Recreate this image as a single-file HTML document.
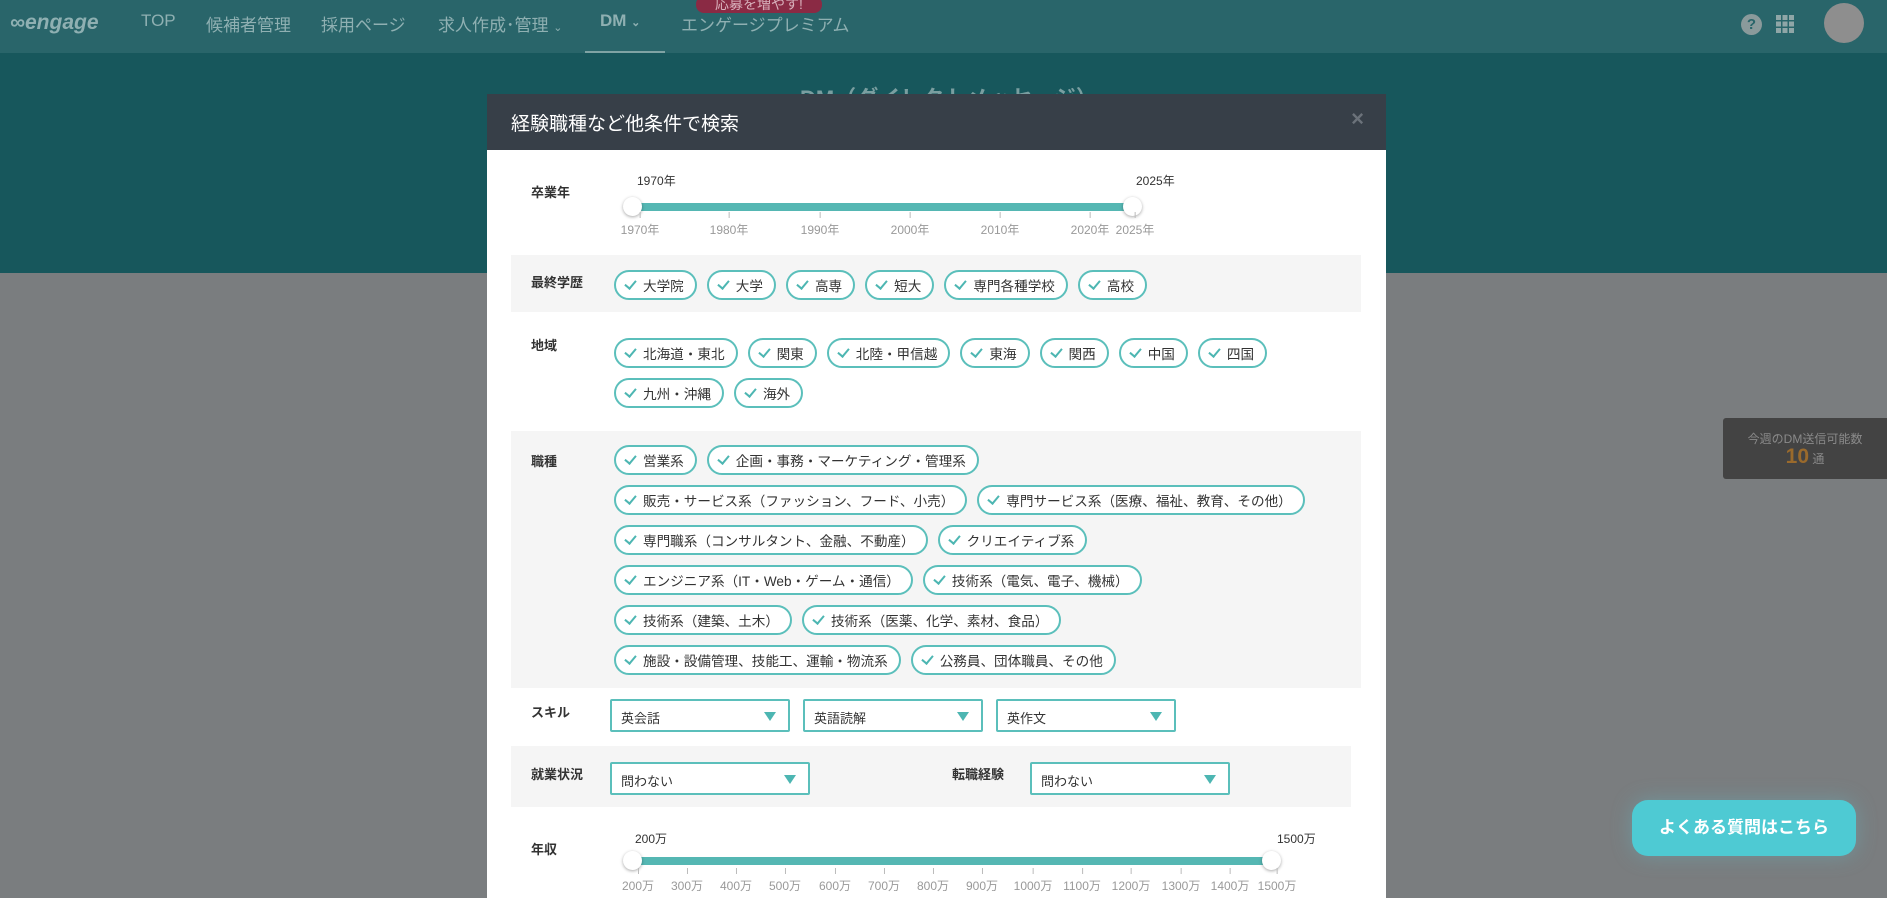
<!DOCTYPE html>
<html><head><meta charset="utf-8"><style>
*{box-sizing:border-box;margin:0;padding:0}
body{width:1887px;height:898px;overflow:hidden;position:relative;background:#7a7d7f;font-family:"Liberation Sans","Noto Sans CJK JP",sans-serif;}
.nav{position:absolute;left:0;top:0;width:1887px;height:53px;background:#29656a;}
.nav .it{position:absolute;top:11px;font-size:17px;color:#8fb0b2;}
.band{position:absolute;left:0;top:53px;width:1887px;height:220px;background:#17575c;}
.modal{position:absolute;left:487px;top:94px;width:899px;height:804px;background:#fff;}
.mh{height:56px;background:#373f48;color:#fff;font-size:19px;padding:15px 24px;position:relative}
.mh .x{position:absolute;right:22px;top:12px;color:#6b727a;font-size:22px;font-weight:bold}
.row{position:absolute;left:24px;width:850px;}
.lbl{position:absolute;left:20px;font-size:13px;font-weight:bold;color:#333}
.chips{position:absolute;left:103px;width:740px;display:flex;flex-direction:column;gap:10px}
.ln{display:flex;gap:10px}
.chip{height:30px;border:2px solid #5bbfbb;border-radius:15px;padding:0 11px 0 9px;font-size:13.6px;color:#333;display:flex;align-items:center;background:#fff;white-space:nowrap}
.chip:before{content:"";width:5px;height:9px;border-right:2.5px solid #4db6b2;border-bottom:2.5px solid #4db6b2;transform:rotate(40deg);margin:-3px 9px 0 2px}
.sel{position:absolute;height:33px;border:2px solid #5bbfbb;border-radius:2px;font-size:13px;color:#333;padding:7px 9px;background:#fff}
.sel:after{content:"";position:absolute;right:12px;top:11px;border:6px solid transparent;border-top:9px solid #4db6b2;border-bottom:0}
.track{position:absolute;height:8px;background:#55b7b3}
.knob{position:absolute;width:19px;height:19px;border-radius:50%;background:#fff;box-shadow:0 1px 3px rgba(0,0,0,.35)}
.tk{position:absolute;font-size:12px;color:#999;transform:translateX(-50%)}
.tk:before{content:"";position:absolute;left:50%;top:-9px;width:1px;height:6px;background:#bbb}
.vl{position:absolute;font-size:12px;color:#333}
</style></head><body>
<div class="nav">
 <div style="position:absolute;left:10px;top:11px;font-size:21px;font-style:italic;font-weight:bold;color:#8fb0b2;letter-spacing:0">∞<span>engage</span></div>
 <div class="it" style="left:141px">TOP</div>
 <div class="it" style="left:206px">候補者管理</div>
 <div class="it" style="left:321px">採用ページ</div>
 <div class="it" style="left:438px">求人作成･管理 <span style="font-size:11px">⌄</span></div>
 <div class="it" style="left:600px;font-weight:bold">DM <span style="font-size:11px">⌄</span></div>
 <div class="it" style="left:681px">エンゲージプレミアム</div>
 <div style="position:absolute;left:696px;top:-4px;width:126px;height:17px;background:#8a2a44;border-radius:8px;color:#d8b0bb;font-size:14px;text-align:center;line-height:16px">応募を増やす!</div>
 <div style="position:absolute;left:585px;top:51px;width:80px;height:3px;background:#7fa3a4"></div>
 <div style="position:absolute;left:1741px;top:14px;width:21px;height:21px;border-radius:50%;background:#8a9a9b;color:#29656a;font-weight:bold;font-size:15px;text-align:center;line-height:21px">?</div>
 <div style="position:absolute;left:1776px;top:15px;width:18px;height:18px;background:repeating-linear-gradient(90deg,#8fa6a7 0 5px,transparent 5px 6.5px);-webkit-mask:repeating-linear-gradient(0deg,#000 0 5px,transparent 5px 6.5px)"></div>
 <div style="position:absolute;left:1824px;top:3px;width:40px;height:40px;border-radius:50%;background:#8e8e8e"></div>
</div>
<div class="band"><div style="position:absolute;left:800px;top:28px;font-size:22px;font-weight:bold;color:#7a9ea0">DM（ダイレクトメッセージ）</div></div>
<div style="position:absolute;left:1723px;top:418px;width:164px;height:61px;background:#434343;border-radius:3px 0 0 3px;text-align:center;color:#8a8a8a;font-size:12px;padding-top:12px">今週のDM送信可能数<br><span style="color:#9a6a2c;font-size:21px;font-weight:bold;line-height:20px">10</span> 通</div>
<div style="position:absolute;left:1632px;top:800px;width:224px;height:56px;background:#4ecad3;border-radius:16px;color:#fff;font-weight:bold;font-size:17px;text-align:center;line-height:56px;box-shadow:0 0 20px rgba(100,190,200,.4)">よくある質問はこちら</div>
<div class="modal">
 <div class="mh">経験職種など他条件で検索<span class="x">×</span></div>
 <div class="row" style="top:56px;height:105px">
  <div class="lbl" style="top:32px">卒業年</div>
  <div class="vl" style="left:126px;top:22px">1970年</div>
  <div class="vl" style="left:625px;top:22px">2025年</div>
  <div class="track" style="left:122px;top:53px;width:499px"></div>
  <div class="knob" style="left:112px;top:47px"></div><div class="knob" style="left:612px;top:47px"></div>
  <div class="tk" style="left:129px;top:71px">1970年</div><div class="tk" style="left:218px;top:71px">1980年</div><div class="tk" style="left:309px;top:71px">1990年</div><div class="tk" style="left:399px;top:71px">2000年</div><div class="tk" style="left:489px;top:71px">2010年</div><div class="tk" style="left:579px;top:71px">2020年</div><div class="tk" style="left:624px;top:71px">2025年</div>
 </div>
 <div class="row" style="top:161px;height:57px;background:#f5f5f5">
  <div class="lbl" style="top:17px">最終学歴</div>
  <div class="chips" style="top:15px"><div class="ln"><span class="chip">大学院</span><span class="chip">大学</span><span class="chip">高専</span><span class="chip">短大</span><span class="chip">専門各種学校</span><span class="chip">高校</span></div></div>
 </div>
 <div class="row" style="top:218px;height:119px">
  <div class="lbl" style="top:23px">地域</div>
  <div class="chips" style="top:26px"><div class="ln"><span class="chip">北海道・東北</span><span class="chip">関東</span><span class="chip">北陸・甲信越</span><span class="chip">東海</span><span class="chip">関西</span><span class="chip">中国</span><span class="chip">四国</span></div><div class="ln"><span class="chip">九州・沖縄</span><span class="chip">海外</span></div></div>
 </div>
 <div class="row" style="top:337px;height:257px;background:#f5f5f5">
  <div class="lbl" style="top:20px">職種</div>
  <div class="chips" style="top:14px">
   <div class="ln"><span class="chip">営業系</span><span class="chip">企画・事務・マーケティング・管理系</span></div>
   <div class="ln"><span class="chip">販売・サービス系（ファッション、フード、小売）</span><span class="chip">専門サービス系（医療、福祉、教育、その他）</span></div>
   <div class="ln"><span class="chip">専門職系（コンサルタント、金融、不動産）</span><span class="chip">クリエイティブ系</span></div>
   <div class="ln"><span class="chip">エンジニア系（IT・Web・ゲーム・通信）</span><span class="chip">技術系（電気、電子、機械）</span></div>
   <div class="ln"><span class="chip">技術系（建築、土木）</span><span class="chip">技術系（医薬、化学、素材、食品）</span></div>
   <div class="ln"><span class="chip">施設・設備管理、技能工、運輸・物流系</span><span class="chip">公務員、団体職員、その他</span></div>
  </div>
 </div>
 <div class="row" style="top:594px;height:58px">
  <div class="lbl" style="top:14px">スキル</div>
  <div class="sel" style="left:99px;top:11px;width:180px">英会話</div>
  <div class="sel" style="left:292px;top:11px;width:180px">英語読解</div>
  <div class="sel" style="left:485px;top:11px;width:180px">英作文</div>
 </div>
 <div class="row" style="top:652px;height:61px;width:840px;background:#f5f5f5">
  <div class="lbl" style="top:18px">就業状況</div>
  <div class="sel" style="left:99px;top:16px;width:200px">問わない</div>
  <div class="lbl" style="left:441px;top:18px">転職経験</div>
  <div class="sel" style="left:519px;top:16px;width:200px">問わない</div>
 </div>
 <div class="row" style="top:713px;height:91px">
  <div class="lbl" style="top:32px">年収</div>
  <div class="vl" style="left:124px;top:23px">200万</div>
  <div class="vl" style="left:766px;top:23px">1500万</div>
  <div class="track" style="left:122px;top:50px;width:638px"></div>
  <div class="knob" style="left:112px;top:44px"></div><div class="knob" style="left:751px;top:44px"></div>
  <div class="tk" style="left:127px;top:70px">200万</div><div class="tk" style="left:176px;top:70px">300万</div><div class="tk" style="left:225px;top:70px">400万</div><div class="tk" style="left:274px;top:70px">500万</div><div class="tk" style="left:324px;top:70px">600万</div><div class="tk" style="left:373px;top:70px">700万</div><div class="tk" style="left:422px;top:70px">800万</div><div class="tk" style="left:471px;top:70px">900万</div><div class="tk" style="left:522px;top:70px">1000万</div><div class="tk" style="left:571px;top:70px">1100万</div><div class="tk" style="left:620px;top:70px">1200万</div><div class="tk" style="left:670px;top:70px">1300万</div><div class="tk" style="left:719px;top:70px">1400万</div><div class="tk" style="left:766px;top:70px">1500万</div>
 </div>
</div>
</body></html>
